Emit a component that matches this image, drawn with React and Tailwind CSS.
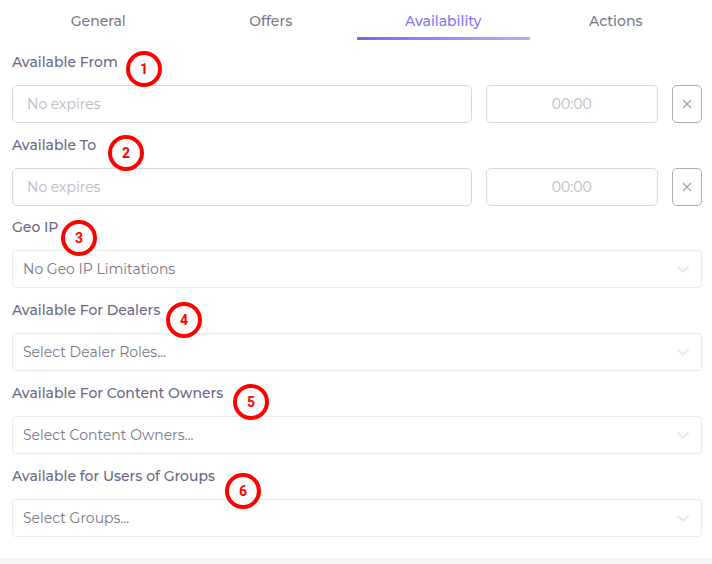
import React from "react";

const tabs = ["General", "Offers", "Availability", "Actions"];

const dateFields = [
  { id: "from", label: "Available From", badge: 1, place: "left-[114px] top-0" },
  { id: "to", label: "Available To", badge: 2, place: "left-[96px] top-px" },
];

const selectFields = [
  { id: "geo", label: "Geo IP", value: "No Geo IP Limitations", badge: 3, place: "left-[49px] top-1" },
  { id: "dealers", label: "Available For Dealers", value: "Select Dealer Roles...", badge: 4, place: "left-[154px] top-[3px]" },
  { id: "owners", label: "Available For Content Owners", value: "Select Content Owners...", badge: 5, place: "left-[221px] top-[2px]" },
  { id: "groups", label: "Available for Users of Groups", value: "Select Groups...", badge: 6, place: "left-[213px] top-2" },
];

function FieldLabel({ id, label, badge, place }) {
  return (
    <div className="relative mb-[10px] h-6">
      <label htmlFor={id} className="block text-sm leading-[22px] font-medium text-[#6b6785]">
        {label}
      </label>
      <span
        className={
          "absolute z-10 flex size-9 items-center justify-center rounded-full border-4 border-[#ff0000] bg-white font-[Roboto,sans-serif] text-sm leading-none font-bold text-[#ff0000] " +
          place
        }
      >
        {badge}
      </span>
    </div>
  );
}

function DateField(props) {
  const box =
    "h-[38px] min-w-0 rounded-[5px] border border-[#d8d6de] bg-white text-sm text-[#6e6b7b] outline-none placeholder:text-[#b9b7c2] ";
  return (
    <div>
      <FieldLabel {...props} />
      <div className="flex gap-[14px]">
        <input id={props.id} type="text" placeholder="No expires" className={box + "flex-1 px-[14px]"} />
        <input
          type="text"
          aria-label={props.label + " time"}
          placeholder="00:00"
          className={box + "w-1/4 px-3 text-center"}
        />
        <button
          type="button"
          aria-label={"Clear " + props.label}
          className="flex h-[38px] w-[30px] items-center justify-center rounded-[5px] border border-[#adadad] bg-white text-[#a3a3a3]"
        >
          <svg width="10" height="10" viewBox="0 0 10 10" fill="none" stroke="currentColor" strokeWidth="1.2">
            <path d="M1 1l8 8M9 1L1 9" />
          </svg>
        </button>
      </div>
    </div>
  );
}

function SelectField(props) {
  return (
    <div>
      <FieldLabel {...props} />
      <div className="relative">
        <select
          id={props.id}
          className="block h-[38px] w-full appearance-none rounded-[4px] border border-[#ebebeb] bg-white pr-10 pl-[10px] text-sm text-[#7a7787] outline-none"
        >
          <option>{props.value}</option>
        </select>
        <svg
          className="pointer-events-none absolute top-[15px] right-3 text-[#ebebeb]"
          width="14"
          height="9"
          viewBox="0 0 14 9"
          fill="none"
          stroke="currentColor"
          strokeWidth="2.2"
          strokeLinecap="round"
          strokeLinejoin="round"
        >
          <path d="M2 2l5 4.6L12 2" />
        </svg>
      </div>
    </div>
  );
}

export default function App() {
  return (
    <div className="min-h-screen bg-[#f3f4f4] font-[Montserrat,Inter,sans-serif]">
      <main className="bg-white pr-[10px] pb-[21px] pl-3">
        <nav className="grid grid-cols-4">
          {tabs.map((tab) => {
            const active = tab === "Availability";
            return (
              <button
                key={tab}
                type="button"
                aria-current={active ? "page" : undefined}
                className={
                  "flex h-10 flex-col text-center text-sm font-medium " + (active ? "text-[#8176f1]" : "text-[#7a7787]")
                }
              >
                <span className="w-full flex-1 pt-[10px] leading-[22px]">{tab}</span>
                {active && <span className="h-[3px] w-full bg-linear-to-r from-[#7367f0] to-[#b5adfa]" />}
              </button>
            );
          })}
        </nav>
        <form>
          <div className="grid gap-[11px] pt-[11px]">
            {dateFields.map((field) => (
              <DateField key={field.id} {...field} />
            ))}
          </div>
          <div className="grid gap-[11px] pt-[10px]">
            {selectFields.map((field) => (
              <SelectField key={field.id} {...field} />
            ))}
          </div>
        </form>
      </main>
    </div>
  );
}
